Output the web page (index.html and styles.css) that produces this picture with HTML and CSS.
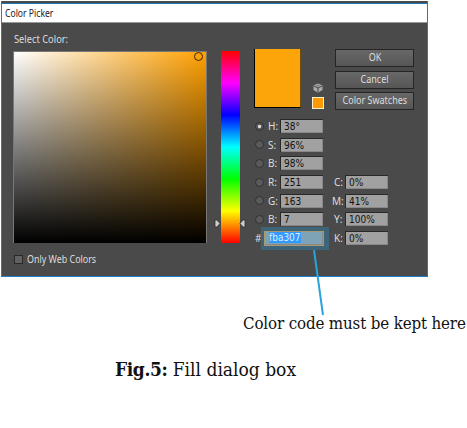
FILE: index.html
```html
<!DOCTYPE html>
<html lang="en">
<head>
<meta charset="utf-8">
<title>Color Picker</title>
<link rel="stylesheet" href="styles.css">
</head>
<body>
<section class="dialog">
  <header class="titlebar"><span class="fit title">Color Picker</span></header>
  <div class="content">
    <div class="picker">
      <div class="label"><span class="fit">Select Color:</span></div>
      <div class="field"><i class="ring"></i></div>
      <div class="check"><i class="box"></i><span class="fit web-label">Only Web Colors</span></div>
    </div>
    <div class="hue">
      <svg class="arrows" width="32" height="9" viewBox="0 0 32 9"><path d="M1 1h2l3 3.500-3 3.500H1zM31 1h-2l-3 3.500 3 3.500h2z" fill="#ccc" stroke="#222" stroke-width=".7"/></svg>
    </div>
    <div class="side">
      <div class="top">
        <div class="swatch"></div>
        <div class="warn">
          <svg width="10" height="10" viewBox="0 0 10 10"><path d="M5 .5 9.500 2.500V7L5 9.700.500 7V2.500z" fill="#aaa"/><path d="M1 3l4 2 4-2M5 5v4.500" fill="none" stroke="#444"/><path d="M3 2.500 5 1.700l2 .8-2 .9z" fill="#777"/></svg>
          <i class="web"></i>
        </div>
        <div class="buttons">
          <div class="btn"><span class="fit">OK</span></div>
          <div class="btn"><span class="fit">Cancel</span></div>
          <div class="btn"><span class="fit">Color Swatches</span></div>
        </div>
      </div>
      <div class="values">
        <div class="col">
          <div class="row"><i class="radio on"></i><b>H:</b><span class="input">38°</span></div>
          <div class="row"><i class="radio"></i><b>S:</b><span class="input">96%</span></div>
          <div class="row"><i class="radio"></i><b>B:</b><span class="input">98%</span></div>
          <div class="row"><i class="radio"></i><b>R:</b><span class="input">251</span></div>
          <div class="row"><i class="radio"></i><b>G:</b><span class="input">163</span></div>
          <div class="row"><i class="radio"></i><b>B:</b><span class="input">7</span></div>
          <div class="row hexrow"><b>#</b><span class="input hex"><em>fba307</em></span><i class="highlight"></i></div>
        </div>
        <div class="col cmyk">
          <div class="row"><b>C:</b><span class="input">0%</span></div>
          <div class="row"><b>M:</b><span class="input">41%</span></div>
          <div class="row"><b>Y:</b><span class="input">100%</span></div>
          <div class="row"><b>K:</b><span class="input">0%</span></div>
        </div>
      </div>
    </div>
  </div>
  <svg class="pointer" width="14" height="66" viewBox="0 0 14 66"><path d="M2 0 11 65" stroke="#29a3dc" stroke-width="2" fill="none"/></svg>
</section>
<p class="note"><span>Color code must be kept here</span></p>
<p class="caption"><strong>Fig.5:</strong> <span>Fill dialog box</span></p>
</body>
</html>
```
FILE: styles.css
```css
* { box-sizing: border-box; }
body { margin: 0; width: 467px; height: 428px; padding: 1px; background: #fff; overflow: hidden; font-family: "Noto Sans", sans-serif; }
p { margin: 0; }
i, b, em { font-style: normal; font-weight: 400; }
.dialog { position: relative; width: 427px; height: 276px; background: #4a4a4a; border: solid #1d7fcb; border-width: 0 1px 1px; color: #ddd; font-size: 10px; line-height: 14px; }
.titlebar { height: 22px; border-top: 2px solid #4a4a4a; border-bottom: 1px solid #999; background: #fff; box-shadow: inset 0 1px #1d76b5; color: #222; padding: 3px 0 0 3px; }
.fit { display: inline-block; white-space: nowrap; transform: scaleX(.93); transform-origin: left; }
.title { transform: scaleX(.86); }
.web-label { transform: scaleX(.89); }
.content { display: flex; height: 252px; padding-left: 11px; }
.picker { width: 194px; }
.label { height: 28px; padding: 9px 0 0 1px; }
.field { position: relative; height: 192px; border: 1px solid #777; border-width: 1px 1px 0; background: linear-gradient(to top, #000, transparent), linear-gradient(to right, #fff, #ffa000); }
.ring { position: absolute; left: 180px; top: 0; width: 9px; height: 9px; border: 1.500px solid #3a2504; border-radius: 50%; }
.check { display: flex; align-items: center; padding-top: 9px; gap: 4px; }
.box { width: 9px; height: 9px; margin-left: 1px; background: #616161; border: 1px solid #292929; }
.hue { position: relative; width: 19px; height: 192px; margin: 28px 14px 0; background: linear-gradient(#f00, #f0f 16.700%, #00f 33.300%, #0ff 50%, #0f0 66.700%, #ff0 83.300%, #f00); }
.arrows { position: absolute; left: -7px; top: 168px; }
.side { width: 160px; padding-top: 26px; }
.top { display: flex; height: 70px; }
.swatch { width: 47px; height: 59px; background: #fca50b; border: 1px solid #000; border-top: 0; border-right-color: #704a05; }
.warn { width: 12px; margin: 34px 11px 0; text-align: center; }
.warn svg { display: block; margin: 0 auto 4px; }
.web { display: block; width: 12px; height: 12px; background: #ff9900; border: 1px solid #fff0cc; }
.buttons { display: grid; gap: 3.500px; height: 61px; width: 79px; }
.btn { height: 18px; border: 1px solid #252525; background: linear-gradient(#686868, #565656); text-align: center; line-height: 15px; }
.btn .fit { transform: scaleX(.9); transform-origin: center; margin: 0 -4px; }
.values { display: flex; }
.col { width: 69px; }
.row { position: relative; display: flex; align-items: center; height: 18.700px; padding-bottom: 4.700px; }
.radio { width: 9px; height: 9px; margin: 0 4px 0 1px; border: 1px solid #303030; border-radius: 50%; background: #5a5a5a; }
.on { background: radial-gradient(#ddd 0 1.300px, #5a5a5a 1.800px); }
.row b { width: 12px; }
.input { width: 43px; height: 14px; padding-left: 3px; background: #a1a1a1; border: 1px solid #292929; border-width: 1px 0 0 1px; box-shadow: inset -1px -1px #888; color: #111; font-family: "DejaVu Sans", sans-serif; font-stretch: condensed; line-height: 13px; }
.cmyk { width: 65px; padding: 56.100px 0 0 9px; }
.row .input { flex: none; }
.cmyk .row b { width: 13px; padding-left: 2px; }
.cmyk .row:nth-child(2) b { padding-left: 0; }
.hexrow b { padding-left: 1px; flex: 0 0 10px; }
.row .hex { position: relative; z-index: 1; width: 60px; height: 15px; border: 1px solid #a99970; background: #7ea2b6; padding-left: 4px; line-height: 12px; }
.hex em { background: #3399ff; color: #d9efff; }
.highlight { position: absolute; left: 7px; top: -4px; width: 68px; height: 23px; background: #3d6577; }
.pointer { position: absolute; left: 310px; top: 249px; }
.note, .caption { font-family: "DejaVu Serif", serif; font-stretch: condensed; color: #111; white-space: nowrap; }
.note { margin: 36px 0 0 242px; font-size: 16.800px; line-height: 20px; letter-spacing: -.15px; }
.caption { margin: 24px 0 0 114px; font-size: 19px; line-height: 24px; }
.caption strong { letter-spacing: -.4px; }
```
